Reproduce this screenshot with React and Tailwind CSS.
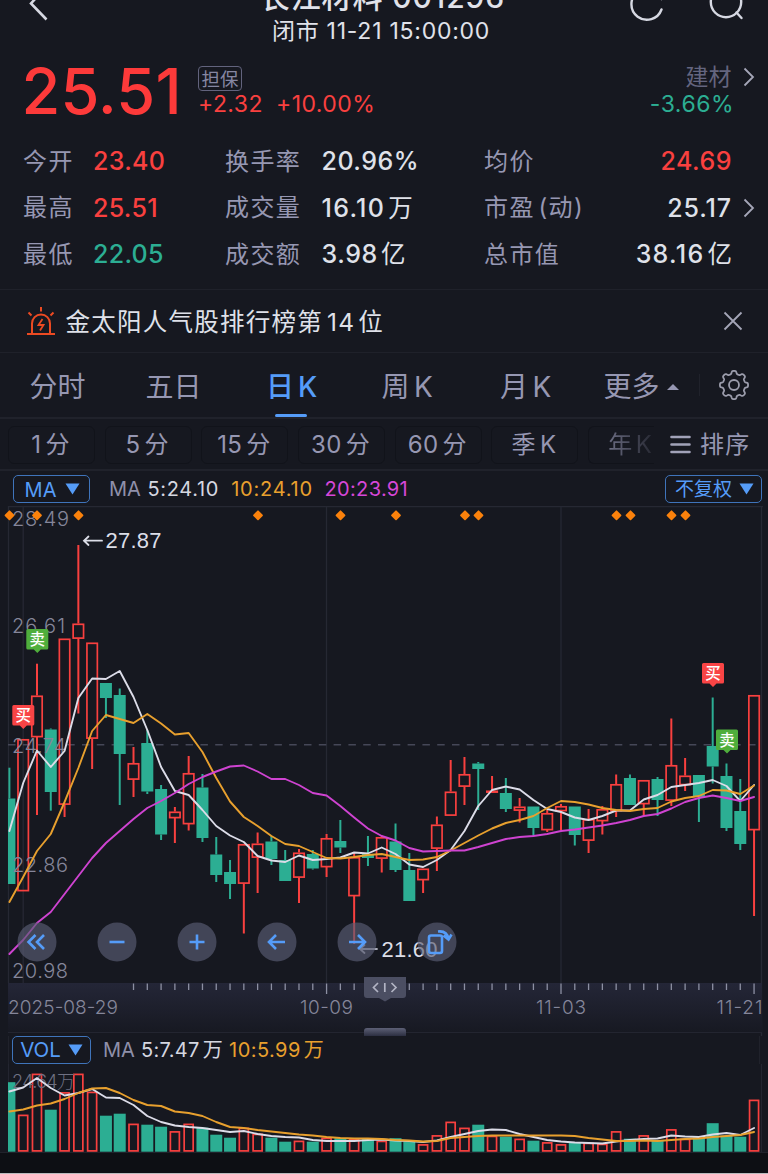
import React from "react";

const FONT = "font-['Inter','Noto_Sans_CJK_SC',sans-serif]";
const RED = "#f9403f";
const GREEN = "#2cae93";

const X = (i) => 9.4 + 13.79 * i;

// [rising, high, bodyTop, bodyBottom, low, volumeTop]
const CANDLES = [
  [0, 767.7, 798.5, 884, 884, 1082.5], [1, 739, 739, 891, 891, 1115], [1, 663.7, 695.5, 737, 815, 1074],
  [0, 728.5, 729.5, 792, 810.7, 1110], [1, 638.5, 638.5, 804.5, 817, 1092.5], [1, 545, 623.5, 638.5, 713.5, 1074],
  [1, 642.5, 642.5, 738.5, 769, 1092], [0, 683, 683, 698, 718, 1116], [0, 688.5, 695, 754, 805, 1114],
  [1, 747, 763, 779.5, 797, 1124], [0, 730, 743, 791.5, 794, 1125], [0, 785, 789, 834.5, 840, 1127],
  [1, 807, 811.5, 818, 843, 1131.5], [1, 756, 773, 824, 830.5, 1124], [0, 774, 787.5, 838, 842, 1128],
  [0, 837, 854.5, 875, 882, 1135], [0, 860, 872, 884, 899, 1138], [1, 844, 844, 883.5, 933.5, 1128],
  [1, 832.5, 843.5, 857.5, 893, 1134], [0, 836, 841.5, 859, 865, 1138], [0, 850, 860, 881, 881, 1142],
  [1, 849, 852.5, 877.5, 903, 1141], [0, 850, 854, 868.5, 869.5, 1142], [1, 834, 838, 867, 877, 1138],
  [0, 820, 841, 847.5, 853, 1138.5], [1, 853, 857, 896, 944, 1139], [0, 836, 854, 858, 866, 1139],
  [1, 836, 837, 858.5, 872.5, 1141], [0, 823.5, 841.5, 870, 872, 1138.5], [0, 853, 870, 901, 901, 1142],
  [1, 868.5, 868.5, 880, 893, 1144.5], [1, 816.5, 824.5, 848.5, 871, 1135.5], [1, 760, 791.5, 815.5, 815.5, 1122],
  [1, 757, 774, 786.5, 805, 1128], [0, 762, 763.5, 769, 810, 1125], [1, 776, 790.5, 792, 792, 1136],
  [0, 778, 793, 809, 812, 1137], [1, 798, 806.5, 810.5, 822.5, 1139], [0, 806.5, 806.5, 828, 836, 1141],
  [1, 810, 813, 830, 832, 1142.5], [1, 804, 806, 811, 830, 1144.5], [0, 806.5, 806.5, 835, 845.5, 1142.5],
  [1, 809, 819, 840.5, 853, 1143], [1, 806, 809, 821, 834.5, 1144], [1, 774.5, 784, 811, 817, 1131.5],
  [0, 774.5, 778, 805, 805, 1139], [1, 780, 780, 804, 816, 1135.5], [0, 777, 779, 800, 816, 1141],
  [1, 718.5, 765, 800.5, 806, 1129.5], [1, 758, 775.5, 785, 791, 1139], [0, 775, 775, 797, 822, 1138],
  [0, 697.5, 746, 766.5, 783.5, 1123.5], [0, 763.5, 776, 828, 831, 1136], [0, 779, 811, 844, 850, 1137],
  [1, 695, 695, 830, 916, 1100],
];

const MA5 = [831, 783, 750.5, 767, 751, 698, 678.5, 679, 671, 697, 730, 767, 791, 795, 810, 826, 835.5, 842, 856, 860.5, 862, 855.5, 860, 859, 857.5, 852.5, 853.5, 847.5, 854, 864.5, 867, 860, 850, 831, 806, 790, 786.5, 789.5, 800, 809, 812, 817.5, 820, 816, 810.5, 810.5, 799.5, 795, 787, 785, 783, 780, 786, 801, 785];
const MA10 = [902, 877, 851, 834, 802, 768, 731, 715, 719, 723, 714, 723.5, 734.5, 733, 752, 778, 801.5, 817, 826, 836, 844, 846, 852, 858, 858.5, 857, 855, 854, 857, 860, 859.5, 857, 850.5, 843, 835.5, 828.5, 823, 820, 816, 808, 801, 802, 804.5, 808, 810, 811, 809, 808, 801.5, 798, 796, 790, 790.5, 794, 785.5];
const MA20 = [954, 940, 923, 912, 894, 876, 858, 843, 831, 819, 808, 801, 793, 784, 777, 771.5, 766.5, 765.5, 771.5, 779, 779, 785, 793, 795.5, 806, 817.5, 828.5, 836, 840.5, 848, 851.5, 851, 850.5, 850.5, 847, 843, 839, 837, 836, 834, 831, 829.5, 827.5, 825.5, 823, 820, 816, 814, 808.5, 802, 798, 795.5, 798, 801, 797];
const VMA5 = [1091.5, 1087.5, 1078, 1088, 1095.5, 1093, 1089, 1097.5, 1098, 1105, 1116, 1122, 1125.5, 1127, 1128, 1130, 1132, 1131, 1134, 1136, 1137, 1137.5, 1140, 1141, 1141, 1141, 1140, 1139.5, 1140.5, 1141, 1142, 1140.5, 1137, 1134, 1131, 1129.5, 1130, 1134, 1137, 1140, 1141.5, 1142.5, 1143, 1143.5, 1141.5, 1140, 1139, 1138.5, 1135.5, 1136.5, 1137, 1134.5, 1133, 1135, 1128];
const VMA10 = [1111.5, 1109.5, 1105.5, 1103.5, 1099, 1093, 1088.5, 1088, 1093, 1100, 1105, 1106, 1111.5, 1113, 1116, 1122, 1127, 1128, 1130, 1131.5, 1133, 1134.5, 1135.5, 1137, 1138, 1138.5, 1138.5, 1139, 1140, 1140.5, 1141.5, 1141, 1138, 1137, 1136, 1135.5, 1135.5, 1135.5, 1135.5, 1135.5, 1135.5, 1136, 1138, 1139.5, 1141, 1141, 1140.5, 1141, 1140, 1139, 1138.5, 1137, 1136, 1135, 1132];

const DIAMONDS = [9.5, 37, 78.5, 258, 340.5, 396, 465, 478.5, 616.5, 630.5, 671.5, 685.5];

function Line({ data, color }) {
  return (
    <polyline fill="none" stroke={color} strokeWidth="1.9" strokeLinejoin="round" strokeLinecap="round"
      points={data.map((y, i) => `${X(i)},${y}`).join(" ")} />
  );
}

function Candle({ i, d }) {
  const [up, high, top, bottom, low] = d;
  const x = X(i);
  const c = up ? RED : GREEN;
  return (
    <g>
      {high < top && <line x1={x} x2={x} y1={high} y2={top} stroke={c} strokeWidth="2" />}
      {low > bottom && <line x1={x} x2={x} y1={bottom} y2={low} stroke={c} strokeWidth="2" />}
      {up
        ? <rect x={x - 5.2} y={top + 0.8} width="10.4" height={Math.max(bottom - top - 1.2, 0.8)} fill="none" stroke={c} strokeWidth="1.7" />
        : <rect x={x - 6} y={top} width="12" height={bottom - top} fill={c} />}
    </g>
  );
}

function Badge({ x, y, label, color }) {
  return (
    <g>
      <path d={`M${x - 11} ${y + 1.5}q0-1.5 1.5-1.5h19q1.5 0 1.5 1.5v17.500q0 1.500-1.500 1.500h-6l-3.500 3.500l-3.500-3.500h-6q-1.500 0-1.500-1.500z`} fill={color} />
      <text x={x} y={y + 16} textAnchor="middle" fontSize="15.500" fontWeight="500" fill="#fff">{label}</text>
    </g>
  );
}

function AxisLabel({ x, y, w, children, size = 20, fill = "#85869a", weight = 300 }) {
  return <text x={x} y={y} fontSize={size} fontWeight={weight} fill={fill} textLength={w} lengthAdjust="spacing">{children}</text>;
}

function PriceChart() {
  return (
    <svg className="block" width="768" height="530" viewBox="0 506 768 530">
      <defs>
        <linearGradient id="axis" x1="0" y1="0" x2="0" y2="1">
          <stop offset="0" stopColor="#242637" />
          <stop offset="1" stopColor="#171922" />
        </linearGradient>
        <linearGradient id="grip" x1="0" y1="0" x2="0" y2="1">
          <stop offset="0" stopColor="#5d6076" />
          <stop offset="1" stopColor="#2c2f42" />
        </linearGradient>
        <clipPath id="plot"><rect x="8" y="500" width="756" height="540" /></clipPath>
      </defs>
      <g stroke="#262833" strokeWidth="1.3">
        <line x1="8" x2="763" y1="506.500" y2="506.500" />
        <line x1="8.500" x2="8.500" y1="506" y2="983" />
        <line x1="23.200" x2="23.200" y1="506" y2="983" />
        <line x1="326.500" x2="326.500" y1="506" y2="983" />
        <line x1="561" x2="561" y1="506" y2="983" />
        <line x1="761.500" x2="761.500" y1="506" y2="1036" />
      </g>
      <line x1="8" x2="762" y1="744.800" y2="744.800" stroke="#454757" strokeWidth="1.500" strokeDasharray="7.500 7.300" />
      <rect x="8" y="983" width="754" height="49" fill="url(#axis)" />
      <line x1="8" x2="762" y1="1032.500" y2="1032.500" stroke="#232530" />
      <g clipPath="url(#plot)">
        {CANDLES.map((d, i) => <Candle key={i} i={i} d={d} />)}
      </g>
      <AxisLabel x={12} y={526} w={57}>28.49</AxisLabel>
      <AxisLabel x={12} y={633} w={53}>26.61</AxisLabel>
      <AxisLabel x={12} y={752.500} w={54}>24.74</AxisLabel>
      <AxisLabel x={12} y={871.500} w={56}>22.86</AxisLabel>
      <AxisLabel x={12} y={978} w={56}>20.98</AxisLabel>
      {DIAMONDS.map((x) => (
        <path key={x} d={`M${x - 4} 515.300l4-4l4 4l-4 4z`} fill="#fb820c" stroke="#fb820c" strokeWidth="1.800" strokeLinejoin="round" />
      ))}
      <Line data={MA5} color="#dcdce8" />
      <Line data={MA10} color="#e8a02e" />
      <Line data={MA20} color="#cf43d1" />
      <Badge x={23.300} y={705} label="买" color="#f94445" />
      <Badge x={37.300} y={629} label="卖" color="#4fae3c" />
      <Badge x={713} y={663} label="买" color="#f94445" />
      <Badge x={727} y={729.500} label="卖" color="#4fae3c" />
      <g stroke="#dcdee8" strokeWidth="1.800" fill="none" strokeLinecap="round">
        <path d="M102 540.700H84M88.500 536.500L84 540.700L88.500 545" />
        <path d="M377 949H360M364.500 945L360 949L364.500 953" stroke="#a9abb7" />
      </g>
      <g className="font-['Liberation_Sans',sans-serif]" fontSize="22" fill="#dcdee8">
        <text x="105.500" y="548.300" textLength="56">27.87</text>
        <text x="381.500" y="956.800" textLength="56">21.60</text>
      </g>
      <g stroke="#8d90a3" strokeWidth="1.300">
        {CANDLES.map((_, i) => i >= 9 && (
          <line key={i} x1={X(i)} x2={X(i)} y1="983.500" y2={i === 23 || i === 40 || i === 54 ? 994 : 990} />
        ))}
      </g>
      <path d="M364 977h42v18q0 3-3 3h-12l-6 3.500l-6-3.500h-12q-3 0-3-3z" fill="#4b4e62" />
      <g stroke="#b2b4c4" strokeWidth="1.700" fill="none">
        <path d="M378 983l-4.500 4.500l4.500 4.500M391.500 983l4.500 4.500l-4.500 4.500M384.800 983v9" />
      </g>
      <path d="M364 1036v-5q0-3 3-3h36q3 0 3 3v5z" fill="url(#grip)" />
      <AxisLabel x={8} y={1014} w={110} size={19}>2025-08-29</AxisLabel>
      <AxisLabel x={300} y={1014} w={53} size={19}>10-09</AxisLabel>
      <AxisLabel x={536} y={1014} w={50} size={19}>11-03</AxisLabel>
      <AxisLabel x={716.500} y={1014} w={46} size={19}>11-21</AxisLabel>
    </svg>
  );
}

function VolumeChart() {
  return (
    <svg className="block" width="768" height="110" viewBox="0 1064 768 110">
      <clipPath id="vol"><rect x="8" y="1064" width="756" height="90" /></clipPath>
      <g stroke="#232530">
        <line x1="8.500" x2="8.500" y1="1064" y2="1152" />
        <line x1="761.500" x2="761.500" y1="1064" y2="1152" />
      </g>
      <g clipPath="url(#vol)">
        {CANDLES.map(([up, , , , , top], i) => up
          ? <rect key={i} x={X(i) - 4.500} y={top + 0.400} width="9" height={1150.500 - top} fill="none" stroke={RED} strokeWidth="1.700" />
          : <rect key={i} x={X(i) - 6} y={top - 0.300} width="12" height={1152 - top} fill={GREEN} />)}
      </g>
      <AxisLabel x={12} y={1087.500} w={63} size={18} fill="#6f7082">24.64万</AxisLabel>
      <Line data={VMA5} color="#dcdce8" />
      <Line data={VMA10} color="#e8a02e" />
      <rect x="0" y="1152" width="768" height="1" fill="#20222b" />
      <rect x="0" y="1153" width="768" height="20" fill="#0d0f14" />
      <rect x="0" y="1173" width="768" height="1" fill="#b9bbbd" />
    </svg>
  );
}

const BUTTONS = [
  <path key="a" d="M18.500 13L11.500 20l7 7M27 13L20 20l7 7" />,
  <path key="b" d="M12.500 20H27.500" />,
  <path key="c" d="M12.500 20H27.500M20 12.500V27.500" />,
  <path key="d" d="M28 20H12.500M19 13L12 20L19 27" />,
  <path key="e" d="M12 20H27.500M21 13L28 20L21 27" />,
  <g key="f"><rect x="12" y="13.500" width="13" height="17.500" rx="2" /><path d="M21 9.500Q30 8.500 31.500 17M26.500 13.500L31.500 17.500L34.500 12.500" /></g>,
];

function gearPath() {
  const pts = [];
  for (let k = 0; k < 192; k++) {
    const t = (k / 192) * Math.PI * 2;
    const r = 12.600 + 1.500 * Math.tanh(2.200 * Math.cos(8 * t));
    pts.push(`${(16 + r * Math.sin(t)).toFixed(2)} ${(16 - r * Math.cos(t)).toFixed(2)}`);
  }
  return `M${pts.join("L")}Z`;
}

const Triangle = () => <svg width="15" height="12" viewBox="0 0 15 12"><path d="M0.500 0.500h14L7.500 11.500z" fill="#559cf8" /></svg>;

function Header() {
  return (
    <header className="relative h-[50px] overflow-hidden text-[#e0e2ea]">
      <svg className="absolute left-[28px] top-0" width="22" height="22" fill="none" stroke="#d6d8e2" strokeWidth="2.600"><path d="M11.500 -6L3 3.500L18.500 19.500" /></svg>
      <div className="flex -mt-[21.500px] flex-col items-center">
        <div className="h-[39px] whitespace-nowrap pr-[3px] text-[30px] font-medium leading-[36px] tracking-[0.900px]">长江材料 001296</div>
        <div className="h-[26px] whitespace-nowrap pr-[6px] text-[23px] leading-[26px] tracking-[0.750px]">闭市 11-21 15:00:00</div>
      </div>
      <svg className="absolute left-[628px] top-0" width="120" height="24" fill="none" stroke="#d6d8e2" strokeWidth="2.400" strokeLinecap="round">
        <path d="M33.500 9.500A15.500 15.500 0 1 1 33.500 -1" />
        <circle cx="98" cy="2" r="15.200" /><path d="M108.500 12.500L113.500 18" />
      </svg>
    </header>
  );
}

const WHITE = "tracking-[0.900px] text-[#dfe1e9]";
const STATS = [
  ["今开", "23.40", "text-[#f9403f]", "换手率", "20.96%", "", "tracking-[0.500px]", "均价", "24.69", "", "tracking-[0.500px] text-[#f9403f]"],
  ["最高", "25.51", "text-[#f9403f]", "成交量", "16.10", "万", "tracking-[1.300px]", "市盈 (动)", "25.17", "", WHITE],
  ["最低", "22.05", "text-[#2cae93]", "成交额", "3.98", "亿", "tracking-[0.600px]", "总市值", "38.16", "亿", "tracking-[1.300px] text-[#dfe1e9]"],
];

const Chevron = () => <svg width="12" height="20" viewBox="0 0 12 20" fill="none" stroke="#a5a6b8" strokeWidth="1.800"><path d="M1.500 1.500L10 10L1.500 18.500" /></svg>;

const Unit = ({ children }) => children ? <span className="ml-[3px] text-[24.500px] font-normal tracking-normal">{children}</span> : null;

function Quote() {
  return (
    <section className="h-[240px] border-b border-[#1f212a]">
      <div className="flex h-[88.500px] pl-[21.500px] pr-[13px]">
        <div className="w-[176.500px] pt-[7px] text-[63px] font-medium leading-[68px] tracking-[0.100px] text-[#fd3a3a]">25.51</div>
        <div className="flex-1 pt-[16px]">
          <div className="flex h-[25px] w-[44px] items-center justify-center rounded-[4px] border border-[#62637d] text-[18.500px] leading-[20px] text-[#8687a3]">担保</div>
          <div className="flex h-[26px] gap-[13px] text-[23px] leading-[26px] tracking-[0.450px] text-[#f9403f]"><span>+2.32</span><span>+10.00%</span></div>
        </div>
        <div className="flex flex-col items-end pt-[14px]">
          <div className="flex items-center gap-[11.500px] text-[23px] leading-[26px] text-[#64657f]">建材<Chevron /></div>
          <div className="pr-[21px] pt-[1px] text-[23px] leading-[26px] tracking-[0.500px] text-[#2cae93]">-3.66%</div>
        </div>
      </div>
      {STATS.map(([a, av, ac, b, bv, bu, bc, c, cv, cu, cc]) => (
        <div key={a} className="flex h-[46.500px] items-center whitespace-nowrap pl-[23px] pr-[13px] text-[24px] tracking-[1.400px] text-[#9697b2]">
          <span className="w-[70px]">{a}</span>
          <span className={`w-[132px] text-[25px] font-medium tracking-[0.300px] ${ac}`}>{av}</span>
          <span className="w-[96.500px]">{b}</span>
          <span className={`w-[162.500px] text-[25px] font-medium text-[#dfe1e9] ${bc}`}>{bv}<Unit>{bu}</Unit></span>
          <span className="w-[110px] [word-spacing:-4.500px]">{c}</span>
          <span className={`flex-1 text-right text-[25px] font-medium ${cc}`}>{cv}<Unit>{cu}</Unit></span>
          <span className="flex w-[23px] justify-end">{c.startsWith("市盈") && <Chevron />}</span>
        </div>
      ))}
    </section>
  );
}

function Notice() {
  return (
    <section className="flex h-[63px] items-center border-b border-[#1f212a] pl-[27px] pr-[25px] text-[#dfe1e9]">
      <svg width="28" height="29" viewBox="0 0 28 29" fill="none" stroke="#ec4a22" strokeWidth="2">
        <path d="M0 27h28M5 26V16.500a9 9 0 0 1 18 0V26M14 0v4.500M1.500 5.500l3 3M26.500 5.500l-3 3" />
        <path d="M15.500 12l-4 6h5l-3.500 5.500" strokeWidth="1.800" />
      </svg>
      <span className="ml-[10.500px] flex-1 whitespace-nowrap pt-[1px] text-[24.500px] leading-[30px] tracking-[1.250px]">金太阳人气股排行榜第<span className="ml-[4px] mr-[3px]">14</span>位</span>
      <svg width="20" height="20" stroke="#a5a6b8" strokeWidth="1.800"><path d="M1.500 1.500L18.500 18.500M18.500 1.500L1.500 18.500" /></svg>
    </section>
  );
}

function Tabs() {
  return (
    <nav className="flex h-[66px] items-center border-b-2 border-[#20222b] text-[28px] text-[#9697b2]">
      <div className="flex h-full w-[690px] whitespace-nowrap leading-[68px] [word-spacing:-3.500px]">
        <span className="w-[116px] pl-[29.500px]">分时</span>
        <span className="w-[121px] pl-[29.500px]">五日</span>
        <span className="relative w-[116px] pl-[29px] font-medium text-[#559cf8]">日 K
          <i className="absolute bottom-0 left-[38px] h-[3px] w-[32px] rounded-full bg-[#559cf8]" />
        </span>
        <span className="w-[118px] pl-[28.500px]">周 K</span>
        <span className="w-[132.500px] pl-[29px]">月 K</span>
        <span className="flex items-baseline">更多<svg className="relative -top-[7px] ml-[7px]" width="12" height="6"><path d="M0 6L6 0l6 6z" fill="#9697b2" /></svg></span>
      </div>
      <span className="ml-[9px] h-[22px] w-px bg-[#20222b]" />
      <svg className="ml-[18px]" width="32" height="32" viewBox="0 0 32 32" fill="none" stroke="#9b9cab" strokeWidth="1.800">
        <path d={gearPath()} /><circle cx="16" cy="16" r="5" />
      </svg>
    </nav>
  );
}

function Periods() {
  return (
    <div className="flex h-[52px] items-center gap-[9.700px] border-b-2 border-[#20222b] pl-[8px] pt-[1px] text-[24px] text-[#9697b2] [word-spacing:-3px]">
      {["1 分", "5 分", "15 分", "30 分", "60 分", "季 K"].map((t) => (
        <span key={t} className="flex h-[38px] w-[87px] shrink-0 items-center justify-center whitespace-nowrap rounded-[6px] border border-[#11131a] pr-[2px] pt-[1px] tracking-[0.300px]">{t}</span>
      ))}
      <span className="flex h-[38px] w-[66px] shrink-0 items-center whitespace-nowrap rounded-l-[6px] border border-r-0 border-[#11131a] bg-gradient-to-r from-[#8c8da8] to-[#262832] bg-clip-text pl-[19px] pt-[1px] text-transparent">年 K</span>
      <svg className="ml-[6px] shrink-0" width="21" height="19" stroke="#a1a2b8" strokeWidth="2.600" strokeLinecap="round"><path d="M1.500 2h18M1.500 9.500h18M1.500 17h18" /></svg>
      <span className="-ml-[0.500px] shrink-0 whitespace-nowrap pt-[1px] tracking-[1.300px]">排序</span>
    </div>
  );
}

const CHIP = "flex h-[28px] items-center justify-center rounded-[5px] border-[1.500px] border-[#3f74bb] text-[#559cf8] whitespace-nowrap";

export default function App() {
  return (
    <main className={`h-[1174px] w-[768px] overflow-hidden bg-[#161820] ${FONT}`}>
      <Header />
      <Quote />
      <Notice />
      <Tabs />
      <Periods />
      <div className="flex h-[35px] items-center pl-[13px] pr-[6px] pt-[1px] text-[20px]">
        <div className={`${CHIP} w-[77px] gap-[9px] pl-[2px] text-[20px]`}><span className="pt-[1.500px]">MA</span><Triangle /></div>
        <span className="ml-[19px] text-[#8f90aa]">MA</span>
        <span className="ml-[6.500px] tracking-[0.700px] text-[#d5d7e0]">5:24.10</span>
        <span className="ml-[12px] tracking-[0.800px] text-[#e8a02e]">10:24.10</span>
        <span className="ml-[11.500px] tracking-[0.350px] text-[#d747d8]">20:23.91</span>
        <div className={`${CHIP} ml-auto w-[97px] gap-[7px] pl-[2px]`}><span className="pt-[2px] text-[19px]">不复权</span><Triangle /></div>
      </div>
      <div className="relative">
        <PriceChart />
        <div className="absolute left-[17px] top-[416px] flex gap-[40px]">
          {BUTTONS.map((icon, i) => (
            <svg key={i} width="40" height="40" viewBox="0 0 40 40" fill="none" stroke="#559cf8" strokeWidth="2.600">
              <circle cx="20" cy="20" r="19.500" fill="#5b5e75" fillOpacity="0.650" stroke="none" />
              {icon}
            </svg>
          ))}
        </div>
      </div>
      <div className="mx-[8px] flex h-[28px] items-center border-x border-[#20222b] pl-[3px] text-[20px]">
        <div className={`${CHIP} w-[79px] gap-[7px] text-[20.500px]`}>VOL<Triangle /></div>
        <span className="ml-[12px] text-[#8f90aa]">MA</span>
        <span className="ml-[6px] text-[#d5d7e0] [word-spacing:-3px] tracking-[0.350px]">5:7.47 万</span>
        <span className="ml-[6px] text-[#e8a02e] [word-spacing:-3px] tracking-[0.450px]">10:5.99 万</span>
      </div>
      <VolumeChart />
    </main>
  );
}
